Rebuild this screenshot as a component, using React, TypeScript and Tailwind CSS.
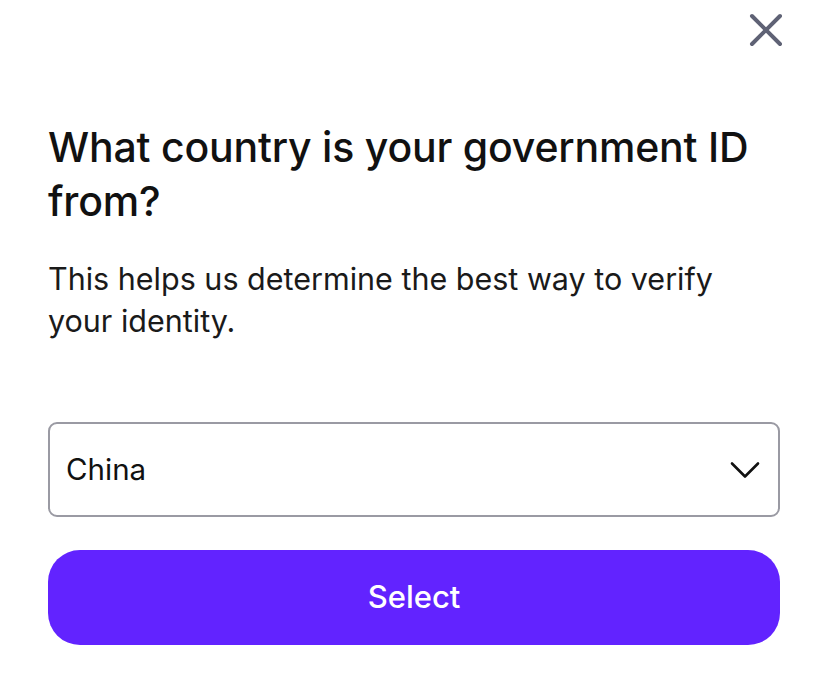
export default function App() {
    return (
        <div className="w-[828px] h-[693px] bg-white px-12 pt-[12px] font-['Inter',sans-serif] text-[#111111]">
            <div className="flex justify-end -mr-[4px]">
                <button className="w-[36px] h-[36px] flex items-center justify-center" aria-label="Close">
                    <svg width="36" height="36" viewBox="0 0 36 36" fill="none">
                        <path d="M4 4L32 32M32 4L4 32" stroke="#5f6275" strokeWidth="4" strokeLinecap="round" />
                    </svg>
                </button>
            </div>

            <h1 className="mt-[72px] text-[41px] leading-[54px] font-medium tracking-[-0.2px]">
                What country is your government ID from?
            </h1>

            <p className="mt-[30px] text-[30.5px] leading-[42px] text-[#1a1a1a]">
                This helps us determine the best way to verify your identity.
            </p>

            <div className="mt-[80px] h-[95px] rounded-[9px] border-2 border-[#9a9aa3] flex items-center justify-between pl-[16px] pr-[18px]">
                <span className="text-[29.5px]">China</span>
                <svg width="30" height="18" viewBox="0 0 30 18" fill="none">
                    <path d="M2 2.5L15 15.5L28 2.5" stroke="#111" strokeWidth="2.6" strokeLinecap="round" strokeLinejoin="round" />
                </svg>
            </div>

            <button className="mt-[33px] w-full h-[95px] rounded-[32px] bg-[#6223ff] text-white text-[31px] font-medium">
                Select
            </button>
        </div>
    );
}
